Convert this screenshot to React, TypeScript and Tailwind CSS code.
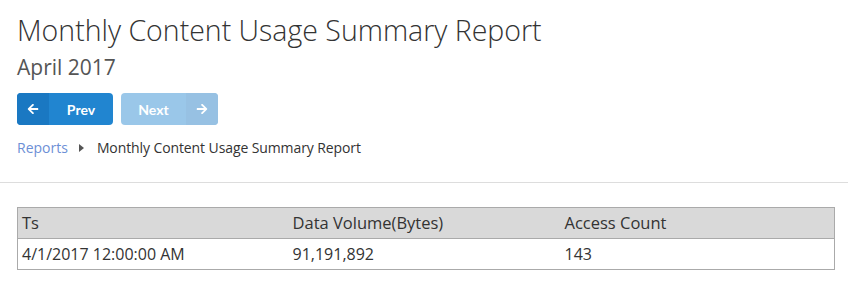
import { FaArrowLeft, FaArrowRight } from "react-icons/fa";

export default function App() {
  return (
    <div className="w-[848px] h-[290px] bg-white font-['Open_Sans',sans-serif] text-[#333]">
      <div className="px-[17px] pt-[10px]">
        <h1 className="text-[28.5px] leading-[40px] font-light text-[#333]">
          Monthly Content Usage Summary Report
        </h1>
        <h2 className="text-[21px] leading-[30px] mt-[2px] text-[#555]">April 2017</h2>

        <div className="flex gap-[8px] mt-[11px]">
          <button className="flex h-[32px] w-[96px] rounded-[4px] overflow-hidden bg-[#2185d0] text-white font-['Lato',sans-serif] font-bold text-[14px]">
            <span className="w-[32px] h-full flex items-center justify-center bg-[#1a78c2]">
              <FaArrowLeft size={12} />
            </span>
            <span className="flex-1 flex items-center justify-center">Prev</span>
          </button>
          <button className="flex h-[32px] w-[97px] rounded-[4px] overflow-hidden bg-[#2185d0] opacity-45 text-white font-['Lato',sans-serif] font-bold text-[14px]">
            <span className="flex-1 flex items-center justify-center">Next</span>
            <span className="w-[32px] h-full flex items-center justify-center bg-[#1a78c2]">
              <FaArrowRight size={12} />
            </span>
          </button>
        </div>

        <nav className="flex items-center mt-[13px] text-[14px] leading-[20px]">
          <span className="text-[#6d8fd6]">Reports</span>
          <svg width="6" height="8" viewBox="0 0 6 8" className="ml-[11px] mr-[12px]">
            <path d="M0 0 L5 4 L0 8 Z" fill="#555" />
          </svg>
          <span className="text-[#333] tracking-[-0.1px]">Monthly Content Usage Summary Report</span>
        </nav>
      </div>

      <div className="mt-[24px] border-t border-[#ddd]" />

      <div className="px-[17px] pt-[24px]">
        <table className="w-[818px] border border-[#aaa] border-collapse text-[16px] text-[#333]">
          <thead>
            <tr className="bg-[#d9d9d9] h-[31px]">
              <th className="text-left font-normal text-[16.5px] px-[4px] w-[271px] border-b border-[#aaa]">Ts</th>
              <th className="text-left font-normal text-[16.5px] px-[4px] w-[272px] border-b border-[#aaa]">Data Volume(Bytes)</th>
              <th className="text-left font-normal text-[16.5px] px-[4px] border-b border-[#aaa]">Access Count</th>
            </tr>
          </thead>
          <tbody>
            <tr className="h-[31px]">
              <td className="px-[4px]">4/1/2017 12:00:00 AM</td>
              <td className="px-[4px]">91,191,892</td>
              <td className="px-[4px]">143</td>
            </tr>
          </tbody>
        </table>
      </div>
    </div>
  );
}
